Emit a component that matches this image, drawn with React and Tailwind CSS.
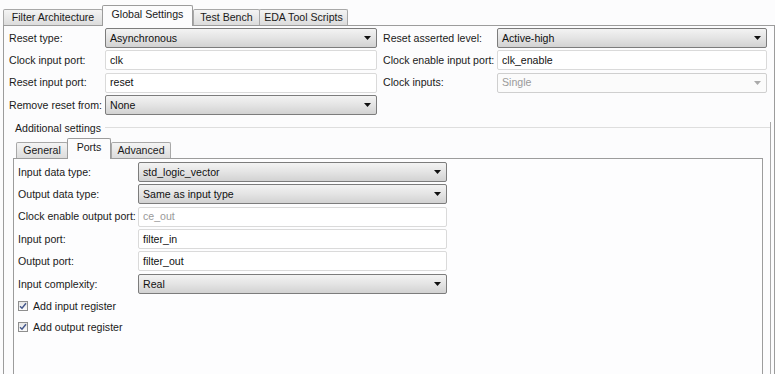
import React from 'react';

function Tab({ label, active, w }) {
  if (active) {
    return (
      <div
        className={`${w} h-[21px] -mb-px relative z-10 border border-b-0 border-[#9c9c9c] rounded-t-[2px] bg-[#fcfcfd] flex items-start justify-center pt-[3px] text-[#1a1a1a]`}
      >
        {label}
      </div>
    );
  }
  return (
    <div
      className={`${w} h-[16px] border border-b-0 border-[#a8a8a8] rounded-t-[2px] bg-gradient-to-b from-[#f4f4f4] to-[#dcdcdc] flex items-center justify-center text-[#1a1a1a] -mr-px`}
    >
      {label}
    </div>
  );
}

function Select({ value, disabled, w }) {
  if (disabled) {
    return (
      <div className={`${w} h-[20px] border border-[#cfcfcf] rounded-[2px] bg-[#fbfbfb] flex items-center justify-between pl-[4px] pr-[5px] text-[#9a9a9a]`}>
        <span>{value}</span>
        <svg width="7" height="4" viewBox="0 0 7 4"><path d="M0 0h7L3.5 4z" fill="#aaaaaa" /></svg>
      </div>
    );
  }
  return (
    <div className={`${w} h-[20px] border border-[#7c7c7c] rounded-[2px] bg-gradient-to-b from-[#f3f3f3] via-[#e4e4e4] to-[#d2d2d2] flex items-center justify-between pl-[4px] pr-[5px] text-[#111]`}>
      <span>{value}</span>
      <svg width="7" height="4" viewBox="0 0 7 4"><path d="M0 0h7L3.5 4z" fill="#111111" /></svg>
    </div>
  );
}

function Field({ value, disabled, w }) {
  return (
    <div className={`${w} h-[20px] border border-[#dadada] rounded-[2px] bg-white flex items-center pl-[4px] ${disabled ? 'text-[#9a9a9a]' : 'text-[#111]'}`}>
      {value}
    </div>
  );
}

function Check({ label }) {
  return (
    <div className="flex items-center gap-[5px] h-[21px]">
      <div className="w-[10px] h-[10px] border border-[#8e8e8e] bg-gradient-to-b from-[#e6e6e6] to-[#fafafa] flex items-center justify-center">
        <svg width="8" height="8" viewBox="0 0 8 8"><path d="M1 4.2L3 6.2L7 1.2" stroke="#45588c" strokeWidth="1.5" fill="none" /></svg>
      </div>
      <span className="text-[#1a1a1a]">{label}</span>
    </div>
  );
}

export default function App() {
  return (
    <div
      className="w-[775px] h-[374px] overflow-hidden bg-[#fcfcfd] text-[10.6px] leading-none text-[#1a1a1a]"
      style={{ fontFamily: '"Liberation Sans", Arial, sans-serif' }}
    >
      {/* main tabs */}
      <div className="flex items-end pl-[3px] pt-[5px]">
        <Tab label="Filter Architecture" w="w-[100px]" />
        <Tab label="Global Settings" active w="w-[91px]" />
        <Tab label="Test Bench" w="w-[67px]" />
        <Tab label="EDA Tool Scripts" w="w-[89px]" />
      </div>

      <div className="ml-[3px] border-t border-l border-r border-[#9c9c9c] h-[360px] pt-[2px]">
        {/* global settings grid */}
        <div className="grid grid-cols-[96px_272px_120px_270px] gap-y-[2.3px] pl-[5px] items-center">
          <span>Reset type:</span>
          <Select value="Asynchronous" w="w-[272px]" />
          <span className="pl-[6px]">Reset asserted level:</span>
          <Select value="Active-high" w="w-[270px]" />

          <span>Clock input port:</span>
          <Field value="clk" w="w-[272px]" />
          <span className="pl-[6px]">Clock enable input port:</span>
          <Field value="clk_enable" w="w-[270px]" />

          <span>Reset input port:</span>
          <Field value="reset" w="w-[272px]" />
          <span className="pl-[6px]">Clock inputs:</span>
          <Select value="Single" disabled w="w-[270px]" />

          <span>Remove reset from:</span>
          <Select value="None" w="w-[272px]" />
          <span />
          <span />
        </div>

        {/* additional settings group */}
        <div className="mt-[7px] ml-[4px] mr-[3px] border-r border-[#a8a8a8] h-[260px]">
          <div className="flex items-center h-[12px]">
            <span className="pl-[7px] pr-[4px] text-[#1a1a1a]">Additional settings</span>
            <div className="flex-1 h-px bg-[#dedede]" />
          </div>

          <div className="flex items-end pl-[8px] mt-[4px]">
            <Tab label="General" w="w-[52px]" />
            <Tab label="Ports" active w="w-[44px]" />
            <Tab label="Advanced" w="w-[60px]" />
          </div>

          <div className="ml-[5px] mr-[7px] border-t border-l border-r border-[#9c9c9c] bg-[#fdfdfe] h-[220px] pt-[3px] pl-[4px]">
            <div className="grid grid-cols-[120px_309px] gap-y-[2.4px] items-center">
              <span>Input data type:</span>
              <Select value="std_logic_vector" w="w-[309px]" />
              <span>Output data type:</span>
              <Select value="Same as input type" w="w-[309px]" />
              <span>Clock enable output port:</span>
              <Field value="ce_out" disabled w="w-[309px]" />
              <span>Input port:</span>
              <Field value="filter_in" w="w-[309px]" />
              <span>Output port:</span>
              <Field value="filter_out" w="w-[309px]" />
              <span>Input complexity:</span>
              <Select value="Real" w="w-[309px]" />
            </div>
            <div className="mt-[2px] flex flex-col">
              <Check label="Add input register" />
              <Check label="Add output register" />
            </div>
          </div>
        </div>
      </div>
    </div>
  );
}
